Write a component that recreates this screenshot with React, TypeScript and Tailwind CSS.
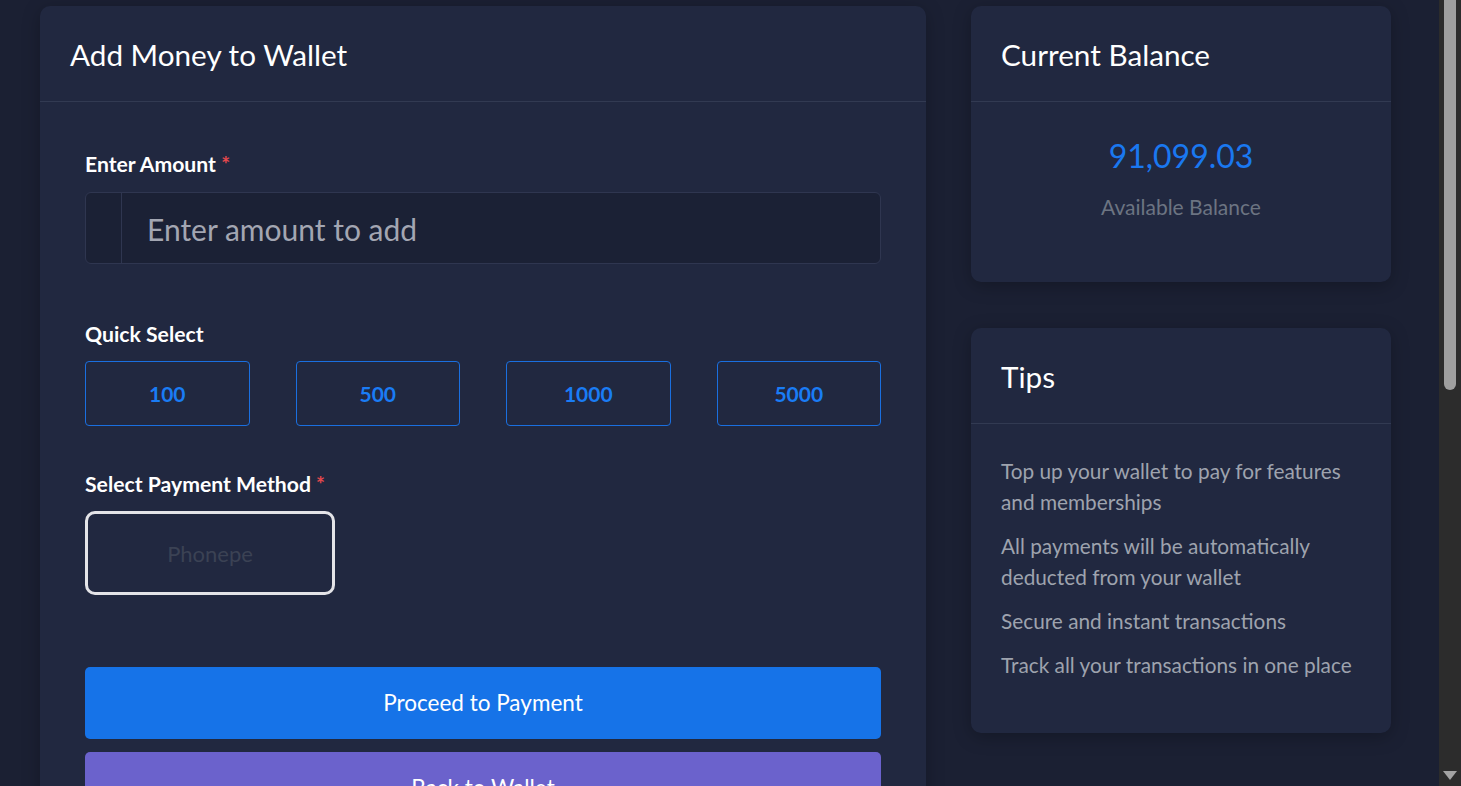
import React from "react";

const font = { fontFamily: "Lato, 'Open Sans', sans-serif" };

function Card({ title, children, className = "" }: { title: string; children: React.ReactNode; className?: string }) {
  return (
    <div className={`bg-[#212840] rounded-[10px] shadow-[0_4px_18px_rgba(0,0,0,0.25)] ${className}`}>
      <div className="h-[96px] px-[30px] flex items-center border-b border-[#323a52]">
        <h2 className="text-[29.7px] text-white leading-none pt-[2px]">{title}</h2>
      </div>
      {children}
    </div>
  );
}

export default function App() {
  return (
    <div style={font} className="h-[786px] w-[1461px] overflow-hidden flex bg-[#1b2033]">
      <div className="flex-1 flex items-start pl-[40px] pt-[6px] gap-[45px]">
        {/* Left card */}
        <Card title="Add Money to Wallet" className="w-[886px] h-[900px] shrink-0">
          <div className="px-[45px] pt-[50px]">
            <label className="block text-[21.2px] font-bold text-white leading-[24px]">
              Enter Amount <span className="text-[#e5484d]">*</span>
            </label>
            <div className="mt-[16px] flex h-[72px] rounded-[6px] border border-[#2f3650] bg-[#1b2135] overflow-hidden">
              <div className="w-[36px] border-r border-[#2f3650]" />
              <div className="flex-1 flex items-center pl-[25px] pt-[3px] text-[30px] text-[#a3a6b2]">Enter amount to add</div>
            </div>

            <label className="block mt-[58px] text-[21.2px] font-bold text-white leading-[24px]">Quick Select</label>
            <div className="mt-[15px] grid grid-cols-4 gap-[46px]">
              {["100", "500", "1000", "5000"].map((v) => (
                <button
                  key={v}
                  className="h-[65px] rounded-[4px] border border-[#1a6fe0] text-[#1a7cf5] text-[21px] font-bold bg-transparent"
                >
                  {v}
                </button>
              ))}
            </div>

            <label className="block mt-[46px] text-[21.2px] font-bold text-white leading-[24px]">
              Select Payment Method <span className="text-[#e5484d]">*</span>
            </label>
            <div className="mt-[15px] w-[250px] h-[84px] rounded-[10px] border-[3px] border-[#e4e4e8] flex items-center justify-center text-[22px] text-[#3b4254]">
              Phonepe
            </div>

            <button className="mt-[72px] w-full h-[72px] rounded-[5px] bg-[#1673e8] text-white text-[22.5px]">
              Proceed to Payment
            </button>
            <button className="mt-[13px] w-full h-[72px] rounded-[5px] bg-[#6b62cc] text-white text-[22.5px]">
              Back to Wallet
            </button>
          </div>
        </Card>

        {/* Right column */}
        <div className="w-[420px] shrink-0 flex flex-col gap-[46px]">
          <Card title="Current Balance" className="h-[276px]">
            <div className="flex flex-col items-center pt-[34px]">
              <div className="text-[32px] text-[#1a78f0] leading-[40px]">91,099.03</div>
              <div className="mt-[19px] text-[21px] text-[#6c7482] leading-[24px]">Available Balance</div>
            </div>
          </Card>
          <Card title="Tips" className="h-[405px]">
            <ul className="px-[30px] pt-[31px] flex flex-col gap-[13px] text-[20.8px] leading-[31px] text-[#9ea3ae]">
              <li>Top up your wallet to pay for features and memberships</li>
              <li>All payments will be automatically deducted from your wallet</li>
              <li>Secure and instant transactions</li>
              <li>Track all your transactions in one place</li>
            </ul>
          </Card>
        </div>
      </div>

      {/* Fake scrollbar */}
      <div className="w-[22px] h-full bg-[#2c2c2c] relative shrink-0">
        <div className="absolute left-[5px] top-0 w-[12px] h-[390px] rounded-b-[6px] bg-[#9f9f9f]" />
        <div className="absolute left-[4px] bottom-[6px] w-0 h-0 border-l-[7px] border-r-[7px] border-t-[9px] border-l-transparent border-r-transparent border-t-[#a3a3a3]" />
      </div>
    </div>
  );
}
